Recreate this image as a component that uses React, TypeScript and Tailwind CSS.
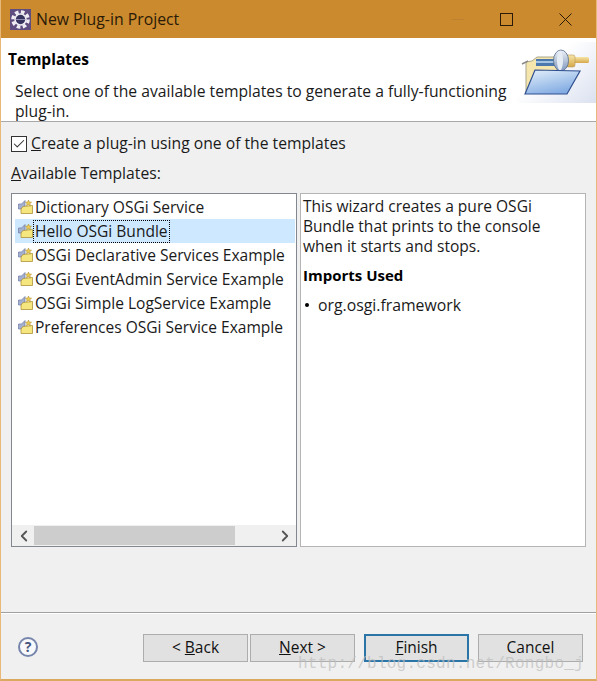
import { ChevronLeft, ChevronRight, Check } from 'lucide-react';

const FONT = "font-['Open_Sans','Noto_Sans',sans-serif]";

const TEMPLATES = [
  'Dictionary OSGi Service',
  'Hello OSGi Bundle',
  'OSGi Declarative Services Example',
  'OSGi EventAdmin Service Example',
  'OSGi Simple LogService Example',
  'Preferences OSGi Service Example',
];

function EclipseIcon() {
  return (
    <svg width="21" height="21" viewBox="0 0 21 21" aria-hidden>
      <rect width="21" height="21" fill="#5f4d80" />
      <circle cx="10.5" cy="10.5" r="7.6" fill="none" stroke="#f0eef2" strokeWidth="3.4" strokeDasharray="3.6 2.4" />
      <circle cx="10.5" cy="10.5" r="6.2" fill="#f0eef2" />
      <circle cx="10.5" cy="10.5" r="4.7" fill="#37345f" />
      <path d="M6 10.5h9" stroke="#8f8bb0" strokeWidth="1" />
    </svg>
  );
}

function WizardBanner() {
  return (
    <svg width="80" height="61" viewBox="0 0 80 61" aria-hidden>
      <defs>
        <linearGradient id="fade" x1="0.1" y1="0.2" x2="1" y2="0.9">
          <stop offset="0.3" stopColor="#ffffff" />
          <stop offset="1" stopColor="#dde3f1" />
        </linearGradient>
        <linearGradient id="front" x1="0" y1="0" x2="0.5" y2="1">
          <stop offset="0" stopColor="#e6f1fb" />
          <stop offset="1" stopColor="#84ade3" />
        </linearGradient>
        <linearGradient id="plug" x1="0" y1="0" x2="0" y2="1">
          <stop offset="0" stopColor="#eef1f6" />
          <stop offset="1" stopColor="#7f97bd" />
        </linearGradient>
        <linearGradient id="prong" x1="0" y1="0" x2="0" y2="1">
          <stop offset="0" stopColor="#f7e6a8" />
          <stop offset="1" stopColor="#d6a84a" />
        </linearGradient>
      </defs>
      <rect width="80" height="61" fill="url(#fade)" />
      <path d="M9 20 L9 50 L40 50 L40 15 L20 15 L15 19 Z" fill="#f5e6ae" stroke="#a9a68c" />
      <path d="M5 22 L11 19" stroke="#8a8a8a" strokeWidth="1.5" />
      <rect x="19" y="17" width="20" height="7" fill="#4c78ad" />
      <rect x="19" y="19" width="20" height="2" fill="#a3c4e2" />
      <rect x="56" y="15" width="16" height="6" rx="1.5" fill="url(#prong)" />
      <rect x="49" y="13" width="9" height="12" rx="2" fill="url(#prong)" stroke="#b8975a" strokeWidth="0.6" />
      <ellipse cx="44" cy="18.5" rx="7.5" ry="10.5" fill="url(#plug)" stroke="#53698c" strokeWidth="0.8" />
      <ellipse cx="43" cy="18.5" rx="3" ry="10" fill="#e6ecf4" />
      <path d="M8 52 L18 28 L63 29 L50 52 Z" fill="url(#front)" stroke="#2f4f8f" strokeWidth="1.2" />
    </svg>
  );
}

function PluginIcon() {
  return (
    <svg className="shrink-0" width="15" height="16" viewBox="0 0 15 16" aria-hidden>
      <path d="M0.5 5 L3.5 5 L7 1.5 L7 11 L3.5 10 L0.5 10 Z" fill="#a4b0cf" stroke="#6f7da5" strokeWidth="0.7" />
      <path d="M3 10 L5 7.5 L14.5 6.5 L14.5 14.5 L3 14.5 Z" fill="#f6e680" stroke="#ad9238" strokeWidth="0.8" />
      <path d="M10.5 1 L11.4 3 L13.6 3.2 L12 4.6 L12.5 6.8 L10.5 5.6 L8.5 6.8 L9 4.6 L7.4 3.2 L9.6 3 Z" fill="#eccb52" stroke="#a98a2a" strokeWidth="0.5" />
    </svg>
  );
}

function WizardButton({ children, primary }: { children: React.ReactNode; primary?: boolean }) {
  return (
    <button
      className={`flex h-[28px] w-[105px] items-center justify-center bg-[#e1e1e1] text-[15.5px] text-[#111] ${
        primary ? 'border-2 border-[#2a75a8]' : 'border border-[#adadad]'
      }`}
    >
      {children}
    </button>
  );
}

export default function App() {
  return (
    <div className={`${FONT} flex h-[681px] w-[597px] flex-col overflow-hidden border-x border-b-2 border-x-[#e8b878] border-b-[#dba860] bg-[#f0f0f0] text-[15.7px] text-[#1a1a1a]`}>
      {/* title bar */}
      <div className="flex h-[38px] shrink-0 items-center bg-[#cc8a2e] pl-[9px]">
        <EclipseIcon />
        <span className="ml-[5px] mt-[1px] text-[15.8px] text-[#2a1a08]">New Plug-in Project</span>
        <div className="ml-auto flex items-center">
          <span className="h-px w-[12px] bg-[#bd8230]" />
          <span className="ml-[36px] h-[13px] w-[13px] border border-[#2a1a08]" />
          <svg className="ml-[46px] mr-[24px]" width="13" height="13" viewBox="0 0 13 13" aria-hidden>
            <path d="M0.5 0.5 L12.5 12.5 M12.5 0.5 L0.5 12.5" stroke="#2a1a08" strokeWidth="1" />
          </svg>
        </div>
      </div>

      {/* wizard header */}
      <div className="relative h-[84px] shrink-0 border-b border-[#a9a9a9] bg-white">
        <div className="absolute right-[-1px] top-[4px]">
          <WizardBanner />
        </div>
        <div className="pl-[7px] pt-[11px] text-[15.5px] font-bold leading-[21px] text-black">Templates</div>
        <p className="relative w-[512px] pl-[14px] pt-[11px] leading-[20px]">
          Select one of the available templates to generate a fully-functioning plug-in.
        </p>
      </div>

      {/* body */}
      <div className="flex min-h-0 flex-1 flex-col border-b border-[#a0a0a0] px-[10px] pt-[11px]">
        <label className="flex h-[21px] items-center gap-[4px]">
          <span className="flex h-[16px] w-[16px] items-center justify-center border border-[#333] bg-white">
            <Check className="h-[14px] w-[14px] text-[#333]" strokeWidth={1.8} />
          </span>
          <span><u>C</u>reate a plug-in using one of the templates</span>
        </label>
        <div className="mt-[9px] h-[21px] leading-[21px]"><u>A</u>vailable Templates:</div>
        <div className="mt-[9px] flex h-[354px] gap-[3px]">
          <div className="flex w-[286px] shrink-0 flex-col border border-[#828790] bg-white text-[15.55px]">
            <ul className="flex-1 pl-[3px] pr-px pt-[1px]">
              {TEMPLATES.map((name) => (
                <li
                  key={name}
                  className={`flex h-[24px] items-center whitespace-nowrap pl-[3px] ${
                    name === 'Hello OSGi Bundle' ? 'bg-[#cde8ff]' : ''
                  }`}
                >
                  <PluginIcon />
                  <span className={`border px-px leading-[21px] ${
                    name === 'Hello OSGi Bundle' ? 'border-dotted border-black' : 'border-transparent'
                  }`}>
                    {name}
                  </span>
                </li>
              ))}
            </ul>
            <div className="flex h-[21px] items-center bg-[#f0f0f0] text-[#555]">
              <ChevronLeft className="ml-[3px] mr-[1px] h-[18px] w-[18px]" strokeWidth={2.4} />
              <div className="h-[19px] w-[201px] bg-[#cdcdcd]" />
              <ChevronRight className="ml-auto mr-[2px] h-[18px] w-[18px]" strokeWidth={2.4} />
            </div>
          </div>
          <div className="flex-1 border border-[#b4b4b4] bg-white pl-[2px] pr-[5px] pt-[2px] text-[15.55px]">
            <p className="leading-[20px]">
              This wizard creates a pure OSGi Bundle that prints to the console when it starts and stops.
            </p>
            <div className="mt-[9px] text-[15px] font-bold leading-[20px] text-black">Imports Used</div>
            <div className="mt-[10px] flex items-center text-[15.8px] leading-[20px]">
              <span className="ml-[2px] h-[4px] w-[4px] rounded-full bg-black" />
              <span className="ml-[9px]">org.osgi.framework</span>
            </div>
          </div>
        </div>
      </div>

      {/* footer */}
      <div className="relative flex h-[66px] shrink-0 items-start border-t border-white pl-[17px] pt-[20px]">
        <span className="mt-[3px] flex h-[20px] w-[20px] items-center justify-center rounded-full border-2 border-[#7685ab] bg-[#f8f9fc] text-[14px] font-bold leading-none text-[#46557f]">
          ?
        </span>
        <div className="ml-auto flex gap-[2px] pr-[13px]">
          <WizardButton>&lt; <u className="ml-1">B</u>ack</WizardButton>
          <div className="mr-[7px]">
            <WizardButton><u>N</u>ext &gt;</WizardButton>
          </div>
          <div className="mr-[7px]">
            <WizardButton primary><u>F</u>inish</WizardButton>
          </div>
          <WizardButton>Cancel</WizardButton>
        </div>
        <div className="pointer-events-none absolute bottom-[6px] right-[12px] font-['Liberation_Mono',monospace] text-[16px] leading-[18px] tracking-[0.26px] text-[#bcbcbc]/70">
          http://blog.csdn.net/Rongbo_j
        </div>
      </div>
    </div>
  );
}
